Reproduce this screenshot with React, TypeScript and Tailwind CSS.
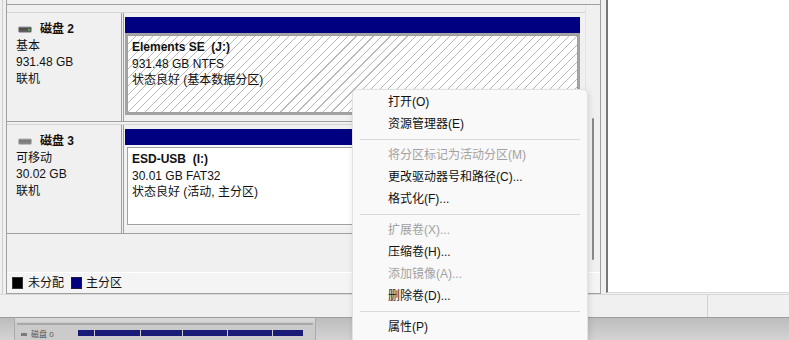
import React from 'react';

type Part = {
  title: string;
  size: string;
  status: string;
  selected?: boolean;
};

type Disk = {
  name: string;
  kind: string;
  size: string;
  state: string;
  online: boolean;
  part: Part;
};

const disks: Disk[] = [
  {
    name: '磁盘 2',
    kind: '基本',
    size: '931.48 GB',
    state: '联机',
    online: true,
    part: { title: 'Elements SE  (J:)', size: '931.48 GB NTFS', status: '状态良好 (基本数据分区)', selected: true },
  },
  {
    name: '磁盘 3',
    kind: '可移动',
    size: '30.02 GB',
    state: '联机',
    online: false,
    part: { title: 'ESD-USB  (I:)', size: '30.01 GB FAT32', status: '状态良好 (活动, 主分区)' },
  },
];

type MenuItem = { label: string; disabled?: boolean } | 'sep';

const menu: MenuItem[] = [
  { label: '打开(O)' },
  { label: '资源管理器(E)' },
  'sep',
  { label: '将分区标记为活动分区(M)', disabled: true },
  { label: '更改驱动器号和路径(C)...' },
  { label: '格式化(F)...' },
  'sep',
  { label: '扩展卷(X)...', disabled: true },
  { label: '压缩卷(H)...' },
  { label: '添加镜像(A)...', disabled: true },
  { label: '删除卷(D)...' },
  'sep',
  { label: '属性(P)' },
];

const DriveIcon: React.FC<{ online: boolean }> = ({ online }) => (
  <svg width="14" height="7" viewBox="0 0 14 7" className="shrink-0">
    <defs>
      <linearGradient id={online ? 'dg1' : 'dg2'} x1="0" y1="0" x2="0" y2="1">
        <stop offset="0" stopColor={online ? '#9a9a9a' : '#b5b5b5'} />
        <stop offset="0.35" stopColor={online ? '#4a4a4a' : '#777777'} />
        <stop offset="1" stopColor={online ? '#6a6a6a' : '#8e8e8e'} />
      </linearGradient>
    </defs>
    <rect x="0.5" y="0.5" width="13" height="6" rx="1" fill={`url(#${online ? 'dg1' : 'dg2'})`} />
    {online && <rect x="10" y="3" width="2" height="1.5" fill="#3fd23f" />}
  </svg>
);

const DiskRow: React.FC<{ disk: Disk; className?: string }> = ({ disk, className }) => {
  const { part } = disk;
  return (
    <div className={`flex h-[110px] border-t border-t-[#d6d6d6] border-b border-b-[#a0a0a0] ${className ?? ''}`}>
      <div className="w-[115px] shrink-0 border-r border-[#a0a0a0] pl-[9px] pt-[8px] leading-[16.6px]">
        <div className="flex items-center">
          <span className="ml-[2px] mr-[8px] flex"><DriveIcon online={disk.online} /></span>
          <span className="font-bold">{disk.name}</span>
        </div>
        <div>{disk.kind}</div>
        <div>{disk.size}</div>
        <div>{disk.state}</div>
      </div>
      <div className="ml-[1px] flex-1 border-l border-[#a0a0a0] pl-[1px] pr-[5px] pt-[4px]">
        <div className="h-[16px] bg-[#000080]" />
        <div className={`h-[82px] p-[2px] ${part.selected ? 'bg-[#a3a3a3]' : 'bg-[#f3f3f3]'}`}>
          <div
            className={`h-full border border-[#a0a0a0] pl-[4px] pt-[3px] leading-[16.6px] ${
              part.selected
                ? 'bg-[image:repeating-linear-gradient(135deg,#ffffff_0px,#ffffff_5.2px,#b9b9b9_5.2px,#b9b9b9_6px)]'
                : 'bg-white'
            }`}
          >
            <div className="whitespace-pre font-bold">{part.title}</div>
            <div>{part.size}</div>
            <div>{part.status}</div>
          </div>
        </div>
      </div>
    </div>
  );
};

const ContextMenu: React.FC = () => (
  <div className="absolute left-[352px] top-[89px] h-[270px] w-[236px] rounded-t-[5px] border border-[#e2e2e2] bg-[#f9f9f9] pt-[1px] shadow-[1px_2px_6px_rgba(0,0,0,0.12)]">
    {menu.map((m, i) =>
      m === 'sep' ? (
        <div key={i} className="flex h-[9px] items-center px-[7px]">
          <div className="h-px w-full bg-[#d9d9d9]" />
        </div>
      ) : (
        <div
          key={i}
          className={`flex h-[22px] items-center pl-[35px] ${m.disabled ? 'text-[#a2a2a2]' : 'text-[#111]'}`}
        >
          {m.label}
        </div>
      )
    )}
  </div>
);

export default function App() {
  return (
    <div className="relative flex h-[340px] w-[789px] flex-col overflow-hidden bg-[#f0f0f0] font-['Liberation_Sans','Noto_Sans_CJK_SC',sans-serif] text-[12px] text-[#111]">
      <div className="flex h-[298px]">
        {/* left volume pane */}
        <div className="flex w-[606px] shrink-0 pl-[2px]">
          <div className="flex flex-1 border-l border-[#cfcfcf] pl-[3px] pr-[5px]">
            <div className="relative flex flex-1 flex-col border-l border-r border-b border-[#a0a0a0]">
              <div className="h-[5px] border-b border-[#a0a0a0]" />
              <div className="flex flex-1">
                <div className="w-[578px] shrink-0 pt-[7px]">
                  <DiskRow disk={disks[0]} />
                  <DiskRow disk={disks[1]} className="mt-[2px]" />
                </div>
                <div className="flex-1 border-l border-[#e4e4e4]" />
              </div>
              <div className="flex h-[21px] items-center border-t border-white bg-[#f4f4f4] pl-[5px]">
                <span className="h-[12px] w-[11px] border border-[#333] bg-black" />
                <span className="ml-[5px]">未分配</span>
                <span className="ml-[7px] h-[12px] w-[11px] border border-[#1a1a40] bg-[#000080]" />
                <span className="ml-[4px]">主分区</span>
              </div>
              <div className="absolute left-[585px] top-[118px] h-[142px] w-[2px] rounded-full bg-[#8a8a8a]" />
            </div>
          </div>
        </div>
        {/* right pane */}
        <div className="mb-[1px] flex-1 border-l-2 border-b border-l-[#777777] border-b-[#dadada] bg-white" />
      </div>

      {/* status bar */}
      <div className="flex h-[23px] border-t border-[#d8d8d8]">
        <div className="w-[708px] border-r border-[#d2d2d2]" />
        <div className="flex-1" />
      </div>

      {/* background window glimpse */}
      <div className="flex flex-1 border-t border-[#9c9c9c] bg-[linear-gradient(#bdbdbd,#d3d3d3)]">
        <div className="ml-[14px] flex w-[302px] flex-col border-l border-r border-[#ababab] bg-[#cbcbcb]">
          <div className="h-[4px] bg-[#d6d6d6]" />
          <div className="mx-[2px] h-[3px] rounded-full border-b-2 border-[#a9a9a9]" />
          <div className="mt-[5px] flex items-start">
            <span className="ml-[6px] mt-[3px] h-[3px] w-[6px] bg-[#7a7a7a]" />
            <span className="ml-[4px] text-[8px] leading-[10px] text-[#555]">磁盘 0</span>
            <div className="ml-[24px] flex flex-1 gap-px pr-[12px]">
              <div className="h-[6px] w-[16px] bg-[#1a1a78]" />
              <div className="h-[6px] w-[45px] bg-[#1a1a78]" />
              <div className="h-[6px] w-[41px] bg-[#1a1a78]" />
              <div className="h-[6px] w-[44px] bg-[#1a1a78]" />
              <div className="h-[6px] w-[44px] bg-[#1a1a78]" />
              <div className="h-[6px] flex-1 bg-[#1a1a78]" />
            </div>
          </div>
        </div>
      </div>

      <ContextMenu />
    </div>
  );
}
